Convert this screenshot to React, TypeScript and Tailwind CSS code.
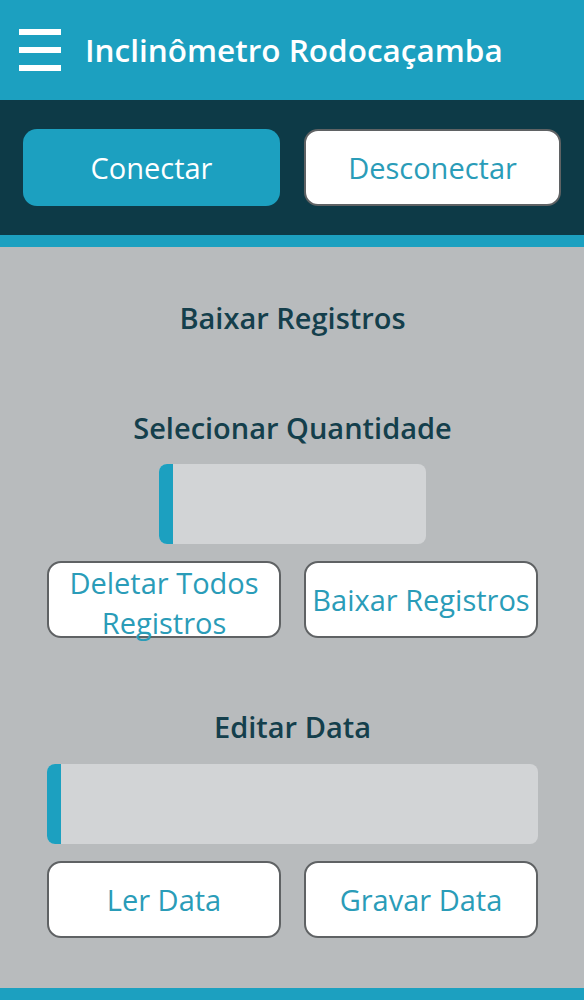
import React from "react";

const font = { fontFamily: '"Open Sans", "Noto Sans", sans-serif' };

const OutlineButton: React.FC<{ label: string }> = ({ label }) => (
  <button className="h-[77px] rounded-[14px] border-2 border-[#5f6264] bg-white px-1 text-[29px] leading-[40px] text-[#2a9cb8]">
    {label}
  </button>
);

const App: React.FC = () => {
  return (
    <div className="flex h-[1000px] w-full flex-col bg-[#b8bbbd]" style={font}>
      {/* header */}
      <div className="flex h-[100px] items-center bg-[#1ca0c0] pl-[19px]">
        <div className="flex w-[42px] flex-col gap-[12px]">
          <span className="block h-[6px] bg-white" />
          <span className="block h-[6px] bg-white" />
          <span className="block h-[6px] bg-white" />
        </div>
        <h1 className="ml-[24px] text-[31.5px] font-semibold text-white">
          Inclinômetro Rodocaçamba
        </h1>
      </div>

      {/* conexao */}
      <div className="grid h-[135px] grid-cols-2 items-center gap-[24px] bg-[#0d3a47] px-[23px]">
        <button className="h-[77px] rounded-[14px] bg-[#1ca0c0] text-[29px] text-white">
          Conectar
        </button>
        <button className="h-[77px] rounded-[14px] border-2 border-[#5f6264] bg-white text-[29px] text-[#2a9cb8]">
          Desconectar
        </button>
      </div>
      <div className="h-[12px] bg-[#1ca0c0]" />

      {/* registros */}
      <div className="flex flex-1 flex-col items-center pl-[47px] pr-[46px]">
        <h2 className="mt-[51px] text-[29px] font-semibold leading-[40px] text-[#143f4c]">
          Baixar Registros
        </h2>
        <h2 className="mt-[70px] text-[29px] font-semibold leading-[40px] text-[#143f4c]">
          Selecionar Quantidade
        </h2>
        <div className="mt-[16px] flex h-[80px] w-[267px] overflow-hidden rounded-[8px] bg-[#d2d4d6]">
          <div className="w-[14px] bg-[#1ca0c0]" />
        </div>
        <div className="mt-[17px] grid w-full grid-cols-2 gap-[23px]">
          <OutlineButton label="Deletar Todos Registros" />
          <OutlineButton label="Baixar Registros" />
        </div>

        <h2 className="mt-[69px] text-[29px] font-semibold leading-[40px] text-[#143f4c]">
          Editar Data
        </h2>
        <div className="mt-[17px] flex h-[80px] w-full overflow-hidden rounded-[8px] bg-[#d2d4d6]">
          <div className="w-[14px] bg-[#1ca0c0]" />
        </div>
        <div className="mt-[17px] grid w-full grid-cols-2 gap-[23px]">
          <OutlineButton label="Ler Data" />
          <OutlineButton label="Gravar Data" />
        </div>
      </div>
      <div className="h-[12px] bg-[#1ca0c0]" />
    </div>
  );
};

export default App;
